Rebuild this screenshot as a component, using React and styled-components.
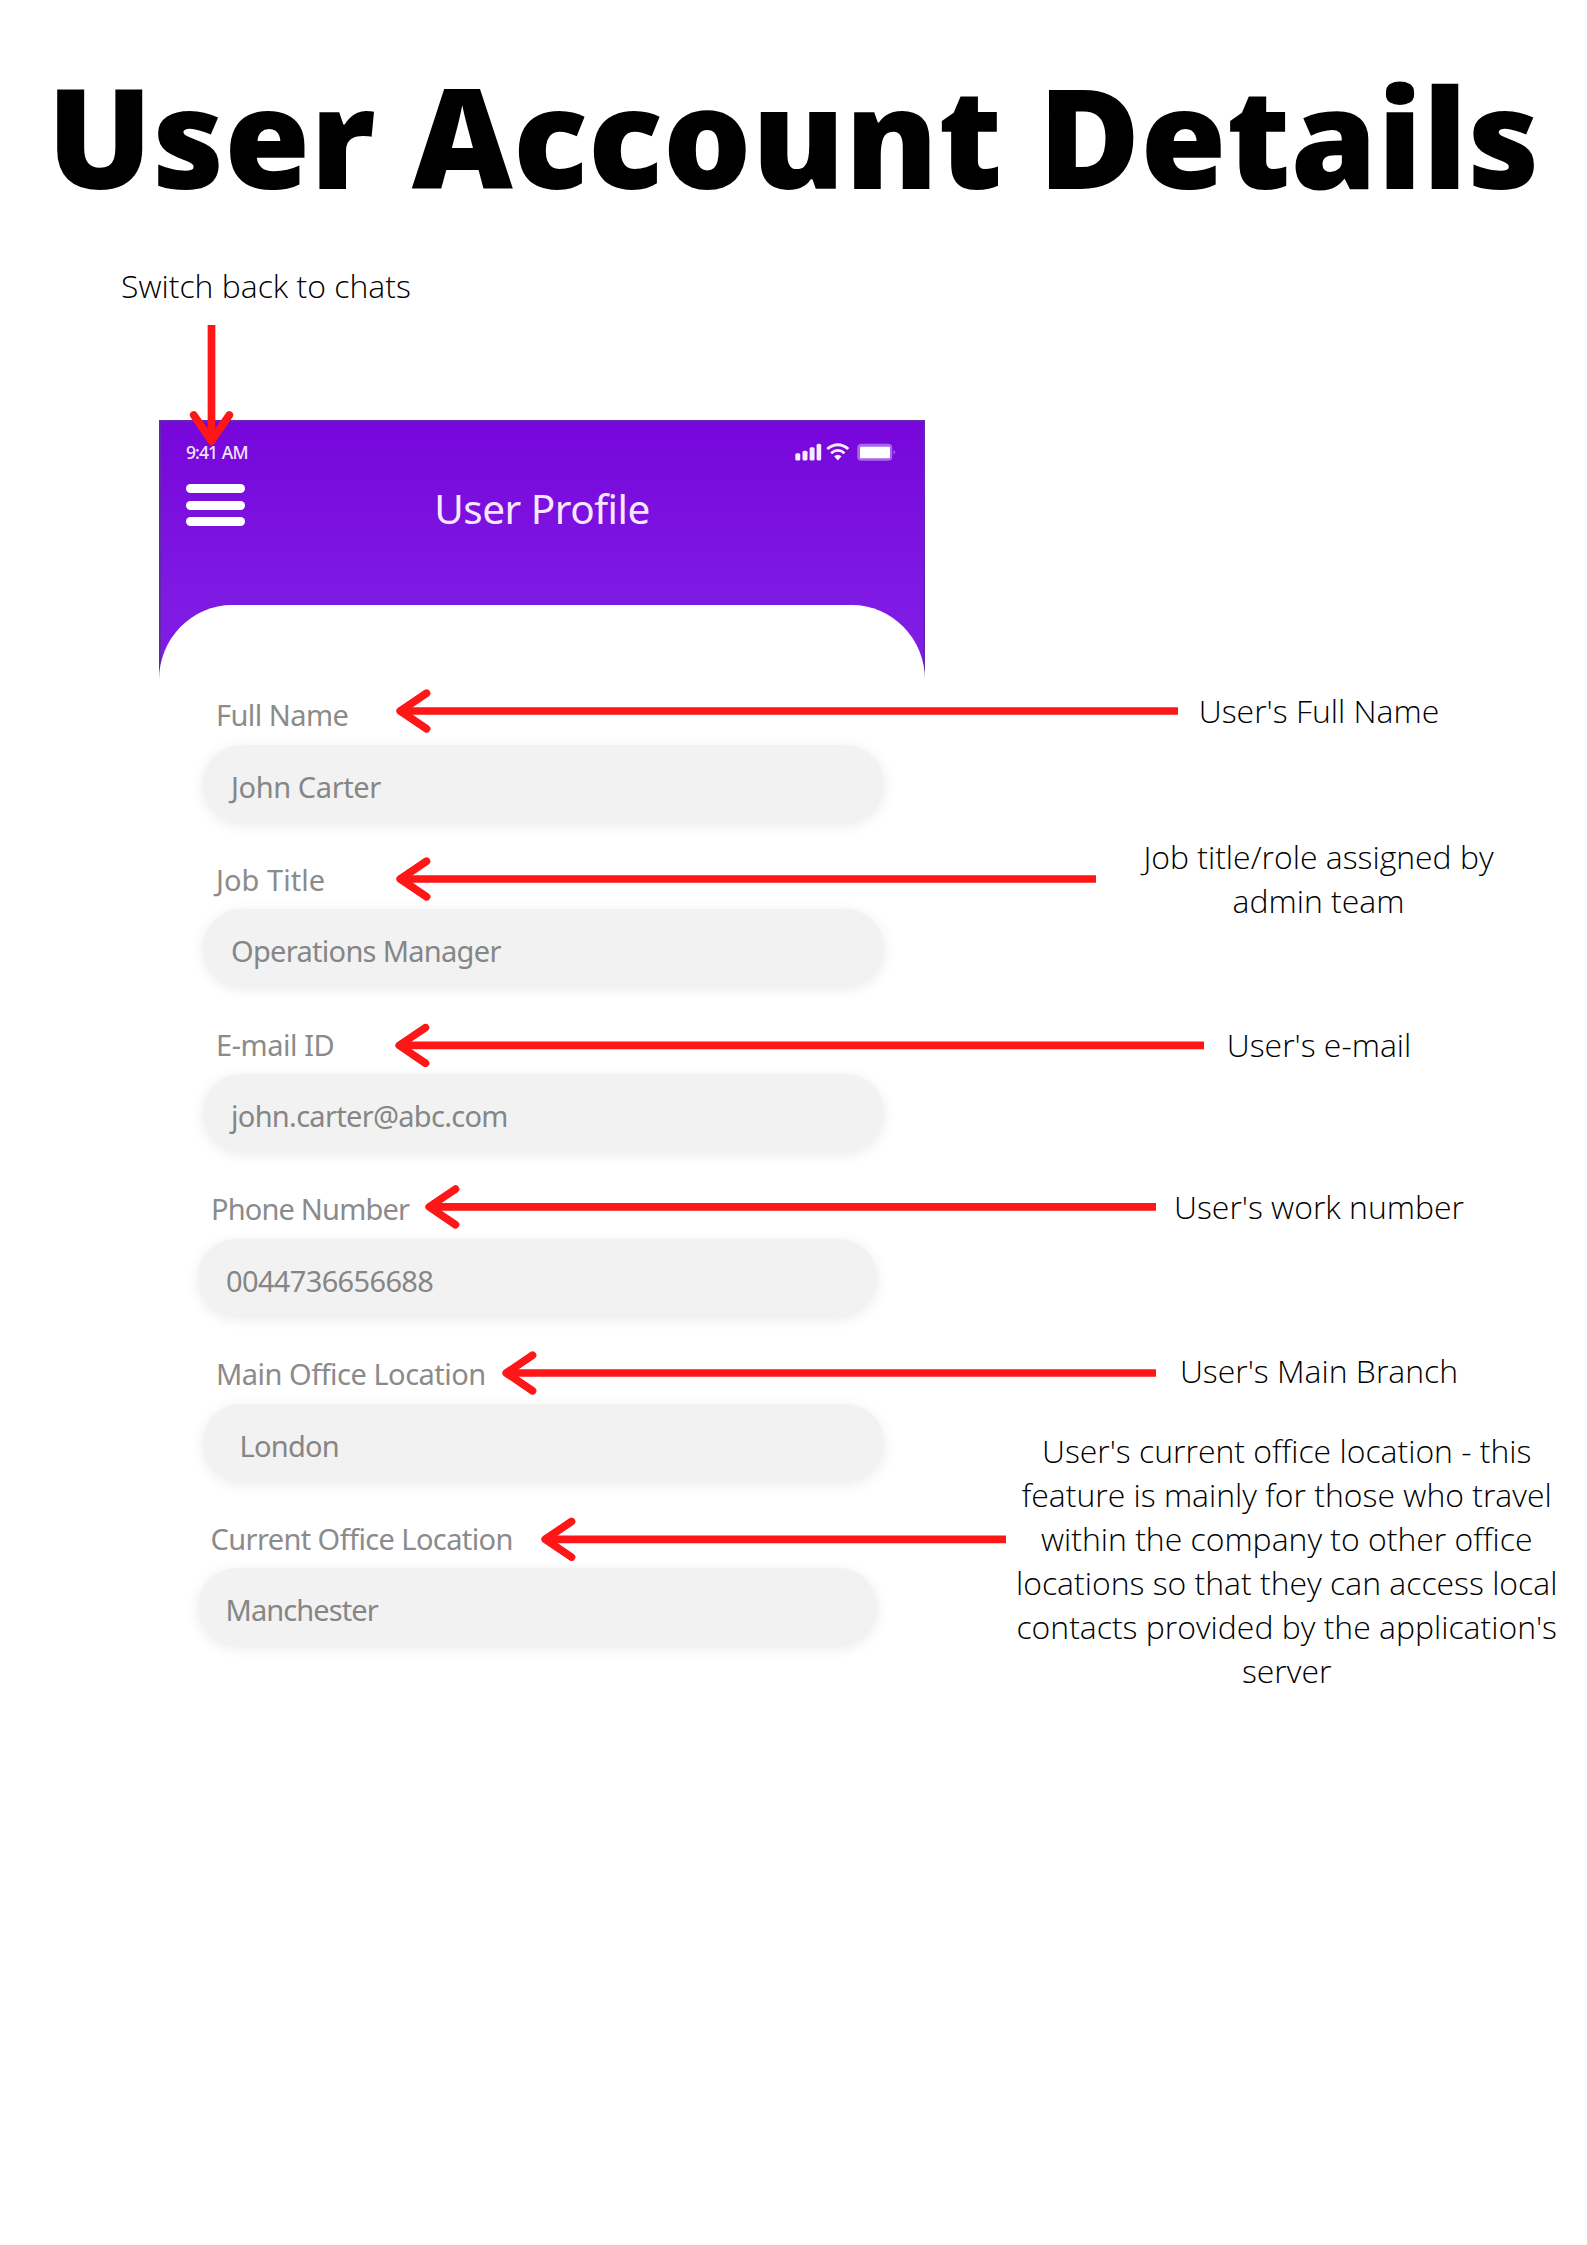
import React from "react";
import styled, { createGlobalStyle } from "styled-components";

const GlobalStyle = createGlobalStyle`
  * { box-sizing: border-box; }
  body { margin: 0; background: #fff; }
`;

const RED = "#ff1616";
const UI_FONT = '"Noto Sans", "Open Sans", sans-serif';

const Page = styled.main`
  width: 1587px;
  height: 2245px;
  background: #fff;
  overflow: hidden;
  display: flex;
  flex-direction: column;
  font-family: "Open Sans", sans-serif;
`;

const Title = styled.h1`
  margin: 0;
  padding: 37px 0 0 47px;
  height: 260px;
  font-size: 139.2px;
  font-weight: 800;
  font-kerning: none;
  line-height: 196px;
  white-space: nowrap;
  color: #000;
`;

const NoteText = styled.span`
  display: block;
  font-size: 31.95px;
  font-weight: 300;
  line-height: 44px;
  color: #000;
  white-space: nowrap;
`;

const BackNote = styled.div`
  height: 65px;
  padding: 4px 0 0 121px;
`;

const DownArrowSlot = styled.div`
  position: relative;
  z-index: 1;
  height: 95px;
  padding-left: 189px;
  line-height: 0;
`;

const PhoneHeader = styled.header`
  width: 766px;
  height: 260px;
  margin-left: 159px;
  border: 2px solid #6128a8;
  border-bottom: 0;
  background: linear-gradient(#7706da, #7f1ae4 70%, #801de4);
  display: flex;
  flex-direction: column;
`;

const StatusBar = styled.div`
  display: flex;
  justify-content: space-between;
  align-items: flex-start;
  height: 62px;
  padding: 19px 25px 0 25px;
`;

const Clock = styled.span`
  margin-top: -1.5px;
  font: 500 17.5px/25px ${UI_FONT};
  letter-spacing: -0.9px;
  word-spacing: 1px;
  color: #f3e4fd;
`;

const NavBar = styled.div`
  display: grid;
  grid-template-columns: 59px 1fr 59px;
  height: 121px;
  padding: 0 25px;
`;

const Burger = styled.div`
  display: flex;
  flex-direction: column;
  gap: 7.6px;
`;

const BurgerBar = styled.i`
  height: 9px;
  border-radius: 4.5px;
  background: #fff;
`;

const ScreenTitle = styled.h2`
  margin: -3px 0 0;
  text-align: center;
  font: 400 40.5px/56px ${UI_FONT};
  letter-spacing: -0.5px;
  color: #f6e6fe;
`;

const SheetTop = styled.div`
  flex: 1;
  margin: 0 -2px;
  background: #fff;
  border-radius: 74px 74px 0 0 / 76px 76px 0 0;
`;

const FieldList = styled.div`
  display: flex;
  flex-direction: column;
  padding-top: 10px;
`;

const Field = styled.section`
  height: 164.8px;
  padding-left: ${(p) => p.$inset}px;
`;

const FieldHead = styled.div`
  display: flex;
  align-items: center;
  height: 50px;
`;

const Label = styled.label`
  flex: none;
  width: ${(p) => p.$width}px;
  padding-left: 13px;
  font: 400 29px/40px ${UI_FONT};
  letter-spacing: ${(p) => p.$track}px;
  color: #8b8b8b;
  white-space: nowrap;
`;

const ArrowSlot = styled.div`
  flex: none;
  line-height: 0;
  transform: translateY(${(p) => p.$shift}px);
`;

const Note = styled.div`
  flex: none;
  width: ${(p) => p.$width}px;
  display: flex;
  flex-direction: column;
  align-items: center;
  transform: translateY(${(p) => p.$shift}px);
`;

const Pill = styled.div`
  width: ${(p) => p.$width}px;
  height: 77px;
  margin-top: 4.5px;
  padding: 22px 0 0 ${(p) => p.$pad}px;
  border-radius: 39px;
  background: #f2f2f2;
  box-shadow: 0 3px 14px rgba(0, 0, 0, 0.085);
  font: 400 29px/40px ${UI_FONT};
  letter-spacing: ${(p) => p.$track}px;
  color: #868686;
  white-space: nowrap;
`;

const LeftArrow = ({ length }) => (
  <svg width={length} height="44" viewBox={`0 0 ${length} 44`} fill="none" stroke={RED} strokeWidth="7.7">
    <path d={`M5 22H${length}`} />
    <path d="M30.5 4.2L4.2 22L30.5 39.8" strokeLinecap="round" strokeLinejoin="round" />
  </svg>
);

const DownArrow = () => (
  <svg width="45" height="122" viewBox="0 0 45 122" fill="none" stroke={RED} strokeWidth="7.7">
    <path d="M22.5 0V115" />
    <path d="M4.7 90L22.5 116.2L40.3 90" strokeLinecap="round" strokeLinejoin="round" />
  </svg>
);

const StatusIcons = () => (
  <svg width="104" height="22" viewBox="0 0 104 22" fill="#f7ecff">
    <rect x="1.3" y="12.2" width="5" height="7.3" rx="1.5" />
    <rect x="8.5" y="9.8" width="5" height="9.7" rx="1.5" />
    <rect x="15.6" y="6.3" width="5" height="13.2" rx="1.5" />
    <rect x="22.6" y="2.8" width="4.6" height="16.7" rx="1.5" />
    <g fill="none" stroke="#f7ecff" strokeWidth="2.8">
      <path d="M33.2 8Q43.8 -0.6 54.4 8" />
      <path d="M37.1 12.2Q43.8 6.6 50.5 12.2" />
    </g>
    <path d="M40.1 15.2Q43.8 12.2 47.5 15.2L43.8 19.4Z" />
    <rect x="63.2" y="2.8" width="35" height="17" rx="4" fill="#a866ec" />
    <rect x="66" y="5.8" width="30" height="11.5" rx="1" fill="#fff" />
    <path d="M99.5 9Q103 11.2 99.5 13.5Z" fill="#a866ec" />
  </svg>
);

const fields = [
  { label: "Full Name", track: -0.55, value: "John Carter", valueTrack: -0.4, arrow: [395.5, 1178], arrowY: -4, center: 1319, noteY: -4, note: ["User's Full Name"] },
  { label: "Job Title", track: 0.05, value: "Operations Manager", valueTrack: -0.7, arrow: [395.5, 1096], arrowY: -1, center: 1318.5, noteY: -1, note: ["Job title/role assigned by", "admin team"] },
  { label: "E-mail ID", track: -0.45, value: "john.carter@abc.com", valueTrack: -0.7, arrow: [394.5, 1204], arrowY: 0.4, center: 1319, noteY: 0, note: ["User's e-mail"] },
  { label: "Phone Number", track: -0.83, value: "0044736656688", valueTrack: -0.65, inset: 198, arrow: [425, 1156], arrowY: -2.1, center: 1319, noteY: -2, note: ["User's work number"] },
  { label: "Main Office Location", track: -0.5, value: "London", valueTrack: -0.75, pad: 36.5, arrow: [502, 1156], arrowY: -1, center: 1319, noteY: -3, note: ["User's Main Branch"] },
  {
    label: "Current Office Location", track: -0.6, value: "Manchester", valueTrack: -0.9, inset: 197.5, arrow: [541, 1006], arrowY: 0.3, center: 1286.7, noteY: 22,
    note: [
      "User's current office location - this",
      "feature is mainly for those who travel",
      "within the company to other office",
      "locations so that they can access local",
      "contacts provided by the application's",
      "server",
    ],
  },
];

const FieldRow = ({ label, track, value, valueTrack, inset = 203, pad = 28, arrow, arrowY, center, noteY, note }) => (
  <Field $inset={inset}>
    <FieldHead>
      <Label $width={arrow[0] - inset} $track={track}>{label}</Label>
      <ArrowSlot $shift={arrowY}><LeftArrow length={arrow[1] - arrow[0]} /></ArrowSlot>
      <Note $width={(center - arrow[1]) * 2} $shift={noteY}>
        {note.map((line) => <NoteText key={line}>{line}</NoteText>)}
      </Note>
    </FieldHead>
    <Pill $width={inset === 203 ? 680.5 : 679} $pad={pad} $track={valueTrack}>{value}</Pill>
  </Field>
);

export default function App() {
  return (
    <>
      <GlobalStyle />
      <Page>
        <Title>User Account Details</Title>
        <BackNote><NoteText>Switch back to chats</NoteText></BackNote>
        <DownArrowSlot><DownArrow /></DownArrowSlot>
        <PhoneHeader>
          <StatusBar><Clock>9:41 AM</Clock><StatusIcons /></StatusBar>
          <NavBar>
            <Burger><BurgerBar /><BurgerBar /><BurgerBar /></Burger>
            <ScreenTitle>User Profile</ScreenTitle>
          </NavBar>
          <SheetTop />
        </PhoneHeader>
        <FieldList>
          {fields.map((field) => <FieldRow key={field.label} {...field} />)}
        </FieldList>
      </Page>
    </>
  );
}
